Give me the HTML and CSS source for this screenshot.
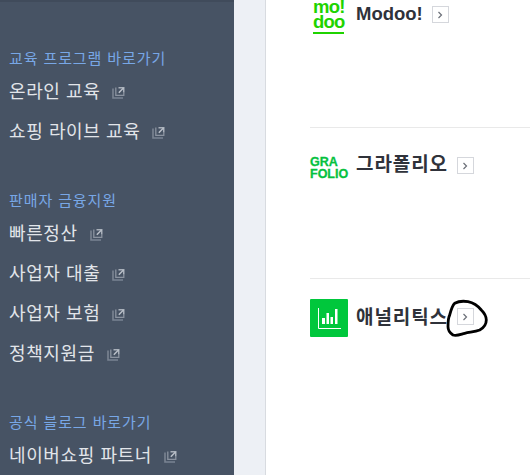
FILE: index.html
```html
<!DOCTYPE html>
<html lang="ko">
<head>
<meta charset="utf-8">
<title>스마트스토어센터</title>
<link rel="stylesheet" href="styles.css">
</head>
<body>
<div class="page">
  <nav class="side">
    <div class="group group-first">
      <div class="heading">교육 프로그램 바로가기</div>
      <a class="link">온라인 교육<svg class="ext" viewBox="0 0 13 13"><use href="#ext"/></svg></a>
      <a class="link">쇼핑 라이브 교육<svg class="ext" viewBox="0 0 13 13"><use href="#ext"/></svg></a>
    </div>
    <div class="group">
      <div class="heading">판매자 금융지원</div>
      <a class="link">빠른정산<svg class="ext" viewBox="0 0 13 13"><use href="#ext"/></svg></a>
      <a class="link">사업자 대출<svg class="ext" viewBox="0 0 13 13"><use href="#ext"/></svg></a>
      <a class="link">사업자 보험<svg class="ext" viewBox="0 0 13 13"><use href="#ext"/></svg></a>
      <a class="link">정책지원금<svg class="ext" viewBox="0 0 13 13"><use href="#ext"/></svg></a>
    </div>
    <div class="group">
      <div class="heading">공식 블로그 바로가기</div>
      <a class="link">네이버쇼핑 파트너<svg class="ext" viewBox="0 0 13 13"><use href="#ext"/></svg></a>
    </div>
  </nav>
  <div class="strip"></div>
  <main class="main">
    <section class="row row-modoo">
      <div class="logo logo-modoo"><span>mo!</span><span>doo</span></div>
      <h2 class="name name-latin">Modoo!</h2>
      <span class="go"><svg viewBox="0 0 6 8"><path d="M1.500 1 4.500 4 1.500 7"/></svg></span>
    </section>
    <section class="row row-graf">
      <div class="logo logo-graf"><span>GRA</span><span>FOLIO</span></div>
      <h2 class="name">그라폴리오</h2>
      <span class="go"><svg viewBox="0 0 6 8"><path d="M1.500 1 4.500 4 1.500 7"/></svg></span>
    </section>
    <section class="row row-ana">
      <div class="logo logo-ana">
        <svg viewBox="0 0 38 38"><path class="axis" d="M8.500 9V29.500H31"/><path class="bar" d="M12 19h3v6h-3zM16.500 14H19v11h-2.500zM20.500 18H23v7h-2.500zM25 10h2.500v15H25z"/></svg>
      </div>
      <h2 class="name">애널리틱스</h2>
      <span class="go">
        <svg viewBox="0 0 6 8"><path d="M1.500 1 4.500 4 1.500 7"/></svg>
        <svg class="scribble" viewBox="0 0 40 38"><path d="M6.700 3.300C11 1 16 1 20 1.700 26 3 30 6 33.300 10c3 3 5 6 5 10 0 4-3 8-6.600 10-5 2-10 2-15 3.300-4 1-8 3-11.700 1.700C2 33 0 30 0 26.700 0 22 0 18 1.700 15 3 10 4 6 6.700 3.300z"/></svg>
      </span>
    </section>
  </main>
</div>
<svg class="defs" width="0" height="0">
  <symbol id="ext" viewBox="0 0 13 13">
    <path d="M1 2.500V12H11" fill="none" stroke="#7a8492" stroke-width="1.600"/>
    <path d="M3.800 1.500V9.300H11.800V6.500" fill="none" stroke="#8b93a0" stroke-width="1.300"/>
    <path d="M6.500 1H12.500V6.500H11V2.500H6.500Z" fill="#a9b0ba"/>
    <path d="M6.800 6.800 11.500 2" stroke="#bcc2cb" stroke-width="1.400"/>
  </symbol>
</svg>
</body>
</html>
```
FILE: styles.css
```css
* { box-sizing: border-box; }
html, body { margin: 0; height: 100%; overflow: hidden; }
body {
  font-family: "Liberation Sans", "Noto Sans CJK KR", sans-serif;
  background: #fff;
}
.page { display: flex; height: 475px; width: 530px; }
.side {
  width: 234px;
  flex: none;
  background: #475364;
  border-top: 2px solid #404b5b;
  padding-left: 9px;
}
.group { margin-top: 41px; }
.group-first { margin-top: 47px; }
.heading {
  font-size: 15px;
  line-height: 20px;
  color: #78a7e6;
  letter-spacing: 0.9px;
  margin-bottom: 1px;
}
.link {
  display: flex;
  align-items: center;
  font-size: 18px;
  letter-spacing: 0.6px;
  height: 40px;
  color: #e2e5ea;
}
.ext { width: 13px; height: 13px; margin-left: 12px; margin-top: 5px; flex: none; }
.strip { width: 32px; flex: none; background: #edf0f5; border-right: 1px solid #d8dbe0; }
.main { flex: 1; padding-left: 44px; }
.row {
  display: flex;
  align-items: flex-start;
  border-bottom: 1px solid #e9e9e9;
}
.row-modoo { height: 128px; padding-top: 2px; }
.row-graf { height: 151px; padding-top: 25px; }
.row-ana { border-bottom: 0; padding-top: 27px; }
.logo { flex: none; }
.name {
  margin: 0;
  font-size: 19px;
  letter-spacing: 0.9px;
  font-weight: 700;
  color: #2f323a;
  line-height: 24px;
}
.name-latin { font-size: 18.500px; letter-spacing: 0; }
.go {
  position: relative;
  display: flex;
  align-items: center;
  justify-content: center;
  width: 17px;
  height: 17px;
  margin: 4px 0 0 9px;
  border: 1px solid #d5d7dc;
  background: #fff;
}
.row-ana .go { margin-top: 2px; }
.go svg { width: 6px; height: 8px; }
.go path { fill: none; stroke: #6b6f78; stroke-width: 1.2; }
.go .scribble { position: absolute; left: -10px; top: -9px; width: 40px; height: 38px; overflow: visible; }
.go .scribble path { stroke: #000; stroke-width: 2.8; }
.logo-modoo {
  display: flex;
  flex-direction: column;
  width: 31px;
  height: 35px;
  margin: -3px 12px 0 3px;
  color: #1fd300;
  font-weight: 700;
  font-size: 18.500px;
  line-height: 15px;
  letter-spacing: -0.8px;
  border-bottom: 2px solid #1fd300;
}
.logo-graf {
  display: flex;
  flex-direction: column;
  justify-content: center;
  width: 38px;
  height: 38px;
  margin: -4px 8px 0 0;
  color: #05c13e;
  font-weight: 700;
  font-size: 12.500px;
  line-height: 12px;
  -webkit-text-stroke: 0.3px #05c13e;
}
.logo-ana {
  width: 38px;
  height: 38px;
  margin: -7px 8px 0 0;
  background: #00c73c;
  border-radius: 1px;
}
.logo-ana svg { display: block; width: 38px; height: 38px; }
.logo-ana .axis { fill: none; stroke: #fff; stroke-width: 1; }
.logo-ana .bar { fill: #fff; stroke: none; }
.defs { position: absolute; }
```
